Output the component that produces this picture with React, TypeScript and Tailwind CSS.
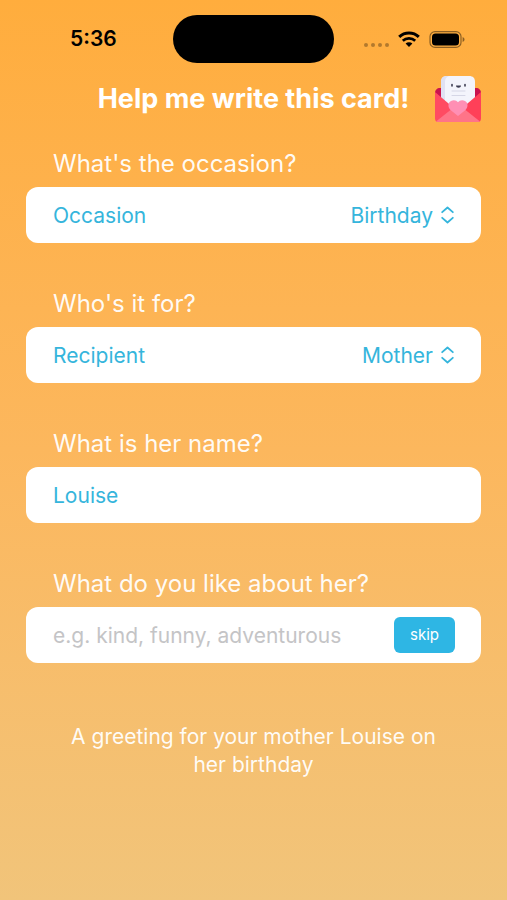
import { useState } from 'react';
import type { ReactNode } from 'react';

type FieldProps = {
  id: string;
  question: string;
  children: ReactNode;
}

type SelectRowProps = {
  id: string;
  label: string;
  value: string;
  options: string[];
  onChange: (value: string) => void;
}

const occasions = ['Birthday', 'Anniversary', 'Wedding', 'Graduation'];
const recipients = ['Mother', 'Father', 'Sister', 'Brother', 'Friend'];

const StatusBar = () => (
  <div className="grid grid-cols-[1fr_auto_1fr] items-center h-12 mt-[15px] pr-[42px] pl-[70px]">
    <span className="text-[21px] leading-7 font-semibold text-black">5:36</span>
    <div className="w-[161px] h-12 -ml-7 rounded-full bg-black" />
    <div className="flex items-center justify-end gap-[9px]">
      <div className="flex gap-[3px] pt-3">
        <span className="w-1 h-1 rounded-full bg-black/30" />
        <span className="w-1 h-1 rounded-full bg-black/30" />
        <span className="w-1 h-1 rounded-full bg-black/30" />
        <span className="w-1 h-1 rounded-full bg-black/30" />
      </div>
      <svg className="w-[22px] h-4" viewBox="0 0 22 16" fill="none" aria-hidden="true">
        <path d="M1.2 5.8C6.7.7 15.3.7 20.8 5.8" stroke="black" strokeWidth="3" />
        <path d="M4.8 9.7c3.4-3 9-3 12.4 0" stroke="black" strokeWidth="2.8" />
        <path d="M11 16l-3.400-3.500c1.900-1.700 4.900-1.700 6.800 0z" fill="black" />
      </svg>
      <svg className="w-9 h-[17px]" viewBox="0 0 36 17" fill="none" aria-hidden="true">
        <rect x="1" y="0.6" width="31" height="15.8" rx="5" stroke="black" strokeOpacity="0.45" strokeWidth="1.2" />
        <rect x="3" y="2.5" width="27" height="12" rx="3.5" fill="black" />
        <path d="M33.600 6v5c1.200-.5 1.900-1.400 1.900-2.500s-.7-2-1.900-2.500z" fill="black" fillOpacity="0.45" />
      </svg>
    </div>
  </div>
);

const LetterIcon = () => (
  <svg className="w-12 h-12" viewBox="0 0 48 48" aria-hidden="true">
    <path d="M1 18c0-3 2-5 5-5h36c3 0 5 2 5 5L37 28H11z" fill="#c9134f" />
    <path d="M7 7c0-4 2-6 6-6h22c4 0 6 2 6 6v17L28 36h-8L7 24z" fill="#f3f4fc" />
    <path d="M7 7c0-4 2-6 6-6h2c-3 1-4 3-4 6v21l-4-4z" fill="#e0e1f3" />
    <path d="M18 9.500v1.500M31 9.500v1.500" stroke="#3d3d52" strokeWidth="1.600" strokeLinecap="round" />
    <path d="M22 10.500h5c0 3-5 3-5 0z" fill="#3d3d52" />
    <path d="M18 16h13M18 20.500h13" stroke="#d5d6e6" strokeWidth="1" strokeLinecap="round" />
    <path d="M1 17l20 17L3 47c-1.500-.7-2-2-2-4z" fill="#ff4b62" />
    <path d="M47 17L27 34l18 13c1.500-.7 2-2 2-4z" fill="#ff4058" />
    <path d="M2 46.500L19 33h10l17 13.500c-1 .5-2 .5-3 .5H5c-1 0-2 0-3-.5z" fill="#ff7488" />
    <path d="M24 41l-7.500-6c-3-3-2.500-7.500.5-9 3-1.300 5.500-.5 7 1.300 1.500-1.800 4-2.600 7-1.300 3 1.500 3.500 6 .5 9z" fill="#ff8fb4" />
  </svg>
);

const Field = ({ id, question, children }: FieldProps) => (
  <section className="flex flex-col gap-2">
    <label htmlFor={id} className="px-[27px] text-2xl leading-[30px] text-white/95">{question}</label>
    <div className="flex items-center justify-between h-14 pr-[26px] pl-[27px] rounded-xl bg-white text-[21px] text-[#35b5dc]">
      {children}
    </div>
  </section>
);

const SelectRow = ({ id, label, value, options, onChange }: SelectRowProps) => (
  <>
    <span className="pt-0.5">{label}</span>
    <div className="flex items-center gap-2">
      <select
        id={id}
        className="appearance-none field-sizing-content pt-0.5 bg-transparent text-right outline-none"
        value={value}
        onChange={(e) => onChange(e.target.value)}
      >
        {options.map((option) => (
          <option key={option}>{option}</option>
        ))}
      </select>
      <svg className="w-[14px] h-[18px]" viewBox="0 0 14 18" fill="none" aria-hidden="true">
        <path
          d="M1.200 6.200l5.300-4.700 5.300 4.700M1.200 11.800l5.300 4.700 5.300-4.700"
          stroke="currentColor"
          strokeWidth="1.800"
          strokeLinecap="round"
          strokeLinejoin="round"
        />
      </svg>
    </div>
  </>
);

const App = () => {
  const [occasion, setOccasion] = useState('Birthday');
  const [recipient, setRecipient] = useState('Mother');
  const [name, setName] = useState('Louise');
  const [likes, setLikes] = useState('');

  const summary = `A greeting for your ${recipient.toLowerCase()} ${name} on her ${occasion.toLowerCase()}`;

  return (
    <div className="flow-root min-h-screen bg-linear-to-b from-[#ffad3d] via-[#fcb75d] to-[#f1c47a] font-['Inter','Liberation_Sans',sans-serif]">
      <StatusBar />
      <header className="grid grid-cols-[1fr_auto_1fr] items-center mt-3 px-[25px]">
        <h1 className="col-start-2 text-[27px] leading-8 font-bold whitespace-nowrap text-white">Help me write this card!</h1>
        <div className="justify-self-end">
          <LetterIcon />
        </div>
      </header>

      <main className="flex flex-col gap-[46px] mt-[26px] px-[26px]">
        <Field id="occasion" question="What's the occasion?">
          <SelectRow id="occasion" label="Occasion" value={occasion} options={occasions} onChange={setOccasion} />
        </Field>
        <Field id="recipient" question="Who's it for?">
          <SelectRow id="recipient" label="Recipient" value={recipient} options={recipients} onChange={setRecipient} />
        </Field>
        <Field id="name" question="What is her name?">
          <input
            id="name"
            type="text"
            className="w-full pt-0.5 bg-transparent outline-none"
            value={name}
            onChange={(e) => setName(e.target.value)}
          />
        </Field>
        <Field id="likes" question="What do you like about her?">
          <input
            id="likes"
            type="text"
            className="flex-1 min-w-0 pt-0.5 bg-transparent outline-none placeholder:text-[#c4c4c6]"
            placeholder="e.g. kind, funny, adventurous"
            value={likes}
            onChange={(e) => setLikes(e.target.value)}
          />
          <button
            className="flex-shrink-0 w-[61px] h-9 rounded-md bg-[#2eb6e4] text-[15px] text-white"
            type="button"
            onClick={() => setLikes('')}
          >
            skip
          </button>
        </Field>
      </main>

      <p className="mt-[60px] px-[70px] pb-8 text-center text-[21px] leading-7 text-white/95">{summary}</p>
    </div>
  );
};

export default App;
